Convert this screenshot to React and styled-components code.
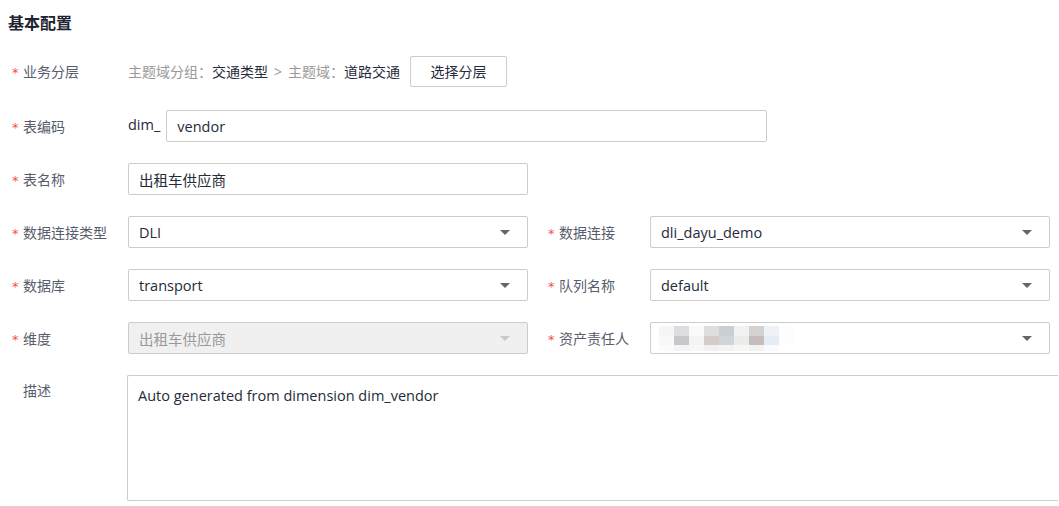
import React from "react";
import styled, { createGlobalStyle } from "styled-components";

const GlobalStyle = createGlobalStyle`
  body {
    margin: 0;
    background: #fff;
    font-family: "Open Sans", "Noto Sans CJK SC", sans-serif;
    font-size: 14px;
    color: #333;
  }
`;

const Page = styled.div`
  width: 1059px;
  height: 506px;
  overflow: hidden;
  padding-top: 10px;
  box-sizing: border-box;
`;

const Title = styled.h3`
  margin: 0 0 21px 8px;
  font-size: 16px;
  line-height: 24px;
  font-weight: bold;
  color: #1f2330;
  font-family: "Noto Sans CJK SC", sans-serif;
`;

const Row = styled.div`
  display: flex;
  align-items: ${(p) => (p.$top ? "flex-start" : "center")};
  min-height: 32px;
  margin-bottom: ${(p) => p.$gap || 21}px;
`;

const Label = styled.div`
  width: ${(p) => p.$width || 128}px;
  flex-shrink: 0;
  box-sizing: border-box;
  padding-left: ${(p) => (p.$plain ? 23 : 12)}px;
  padding-top: ${(p) => (p.$top ? 5 : 0)}px;
  margin-left: ${(p) => p.$offset || 0}px;
  color: #575d6c;
  font-family: "Noto Sans CJK SC", sans-serif;
  display: flex;
  align-items: center;
`;

const Star = styled.span`
  color: #f5504f;
  font-family: "DejaVu Sans", sans-serif;
  font-size: 13px;
  width: 11px;
  position: relative;
  top: 1px;
`;

const Crumb = styled.span`
  color: ${(p) => (p.$dark ? "#252b3a" : "#999")};
  font-family: "Noto Sans CJK SC", sans-serif;
  font-size: 14px;
`;

const Sep = styled.span`
  color: #999;
  margin: 0 6px;
  font-family: "Open Sans", sans-serif;
`;

const Button = styled.button`
  margin-left: 10px;
  width: 97px;
  height: 31px;
  border: 1px solid #ccc;
  border-radius: 2px;
  background: #fff;
  color: #252b3a;
  font-family: "Noto Sans CJK SC", sans-serif;
  font-size: 14px;
  padding: 0;
`;

const Prefix = styled.span`
  color: #252b3a;
  margin-right: 6px;
  font-size: 14.5px;
  position: relative;
  top: -2px;
`;

const Box = styled.div`
  width: ${(p) => p.$width || 400}px;
  height: 32px;
  box-sizing: border-box;
  border: 1px solid #ccc;
  border-radius: 2px;
  background: ${(p) => (p.$disabled ? "#f0f0f0" : "#fff")};
  color: ${(p) => (p.$disabled ? "#999" : "#252b3a")};
  padding: 0 10px;
  display: flex;
  align-items: center;
  justify-content: space-between;
  font-family: "Open Sans", "Noto Sans CJK SC", sans-serif;
  font-size: 14.5px;
`;

const Arrow = styled.span`
  width: 0;
  height: 0;
  border-left: 5px solid transparent;
  border-right: 5px solid transparent;
  border-top: 5px solid ${(p) => (p.$disabled ? "#c8c8c8" : "#666")};
  margin-right: 7px;
`;

const Mosaic = styled.div`
  display: grid;
  grid-template-columns: repeat(9, 15px);
  grid-template-rows: 10px 9px 6px;
  margin-left: -2px;
`;

const Cell = styled.div`
  background: ${(p) => p.$c};
`;

const TextArea = styled.div`
  flex: 1;
  height: 126px;
  box-sizing: border-box;
  border: 1px solid #ccc;
  border-right: none;
  border-radius: 2px 0 0 2px;
  padding: 8px 10px;
  color: #252b3a;
  font-size: 14.5px;
  line-height: 24px;
  margin-left: -1px;
  margin-right: 1px;
`;

const mosaic = [
  "#f7f5f3", "#dcdde0", "#fbfafa", "#e0dedc", "#c9cfd2", "#f2f2f1", "#d6d1d1", "#eef1f6", "#fdfdfd",
  "#faf8f6", "#c8c7cc", "#f3f3f2", "#d5ccca", "#d0d5da", "#ececeb", "#c6bcbb", "#e6ecf4", "#fdfdfd",
  "#fbfbfb", "#f4f4f5", "#f7f7f7", "#f2f0ef", "#f2f3f4", "#f7f7f7", "#f3f2f2", "#fafbfc", "#fff",
];

const Req = ({ children, ...rest }) => (
  <Label {...rest}>
    <Star>*</Star>
    {children}
  </Label>
);

const Select = ({ value, disabled }) => (
  <Box $disabled={disabled}>
    <span>{value}</span>
    <Arrow $disabled={disabled} />
  </Box>
);

export default function App() {
  return (
    <>
      <GlobalStyle />
      <Page>
        <Title>基本配置</Title>

        <Row $gap={23}>
          <Req>业务分层</Req>
          <Crumb>主题域分组：</Crumb>
          <Crumb $dark>交通类型</Crumb>
          <Sep>&gt;</Sep>
          <Crumb>主题域：</Crumb>
          <Crumb $dark>道路交通</Crumb>
          <Button>选择分层</Button>
        </Row>

        <Row>
          <Req>表编码</Req>
          <Prefix>dim_</Prefix>
          <Box $width={601}>vendor</Box>
        </Row>

        <Row>
          <Req>表名称</Req>
          <Box>出租车供应商</Box>
        </Row>

        <Row>
          <Req>数据连接类型</Req>
          <Select value="DLI" />
          <Req $width={114} $offset={8}>数据连接</Req>
          <Select value="dli_dayu_demo" />
        </Row>

        <Row>
          <Req>数据库</Req>
          <Select value="transport" />
          <Req $width={114} $offset={8}>队列名称</Req>
          <Select value="default" />
        </Row>

        <Row>
          <Req>维度</Req>
          <Select value="出租车供应商" disabled />
          <Req $width={114} $offset={8}>资产责任人</Req>
          <Box>
            <Mosaic>
              {mosaic.map((c, i) => (
                <Cell key={i} $c={c} />
              ))}
            </Mosaic>
            <Arrow />
          </Box>
        </Row>

        <Row $top>
          <Label $plain $top>描述</Label>
          <TextArea>Auto generated from dimension dim_vendor</TextArea>
        </Row>
      </Page>
    </>
  );
}
